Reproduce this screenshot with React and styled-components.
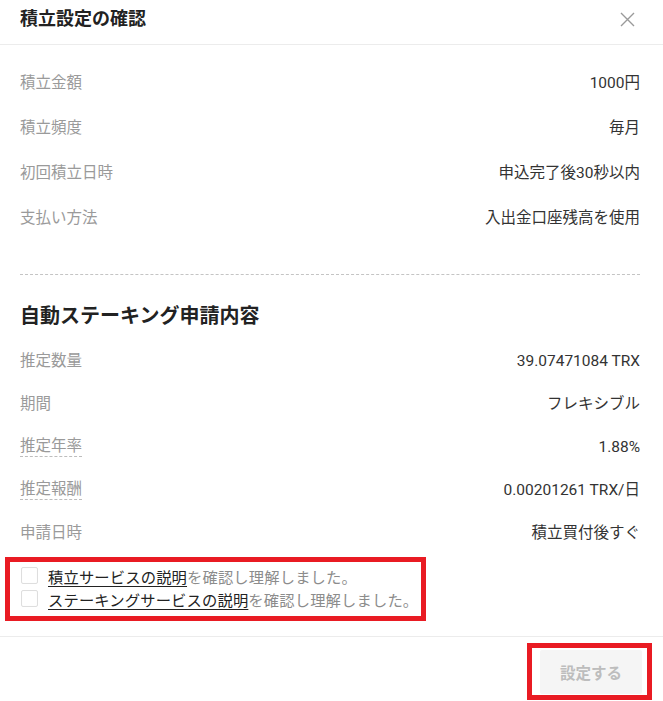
import React, { useState } from 'react';
import styled, { createGlobalStyle } from 'styled-components';

const GlobalStyle = createGlobalStyle`
  body {
    margin: 0;
    background: #fff;
    font-family: "Roboto", "Noto Sans CJK JP", sans-serif;
    color: #333;
  }
  * {
    box-sizing: border-box;
  }
`;

const Modal = styled.div`
  width: 663px;
  height: 701px;
  display: flex;
  flex-direction: column;
  background: #fff;
  overflow: hidden;
`;

const Header = styled.div`
  display: flex;
  align-items: center;
  justify-content: space-between;
  height: 45px;
  padding: 7px 28px 13px 20px;
  border-bottom: 1px solid #ececec;
`;

const Title = styled.h1`
  margin: 0;
  font-size: 18px;
  line-height: 24px;
  font-weight: 700;
  color: #222;
`;

const CloseButton = styled.button`
  border: 0;
  padding: 0;
  background: none;
  width: 16px;
  height: 16px;
  display: flex;
  align-items: center;
  justify-content: center;
  cursor: pointer;
`;

const Body = styled.div`
  flex: 1;
  padding: 15px 23px 0 20px;
  display: flex;
  flex-direction: column;
`;

const Row = styled.div`
  height: ${p => p.$h}px;
  display: flex;
  align-items: center;
  justify-content: space-between;
  font-size: 15.5px;
  line-height: 20px;
`;

const Label = styled.span`
  color: #9a9a9a;
  ${p => p.$hint && `
    border-bottom: 1px dashed #bdbdbd;
    line-height: 19px;
  `}
`;

const Value = styled.span`
  color: #333;
`;

const Divider = styled.div`
  margin-top: 34px;
  border-top: 1px dashed #c4c4c4;
`;

const SectionTitle = styled.h2`
  margin: 27px 0 9px;
  font-size: 20px;
  line-height: 28px;
  font-weight: 700;
  color: #222;
`;

const Marked = styled.div`
  border: 5px solid #e91b23;
`;

const Agreements = styled(Marked)`
  width: 421px;
  margin: 3px 0 0 -15px;
  padding: 2px 0 6px 11px;
`;

const Agreement = styled.label`
  display: flex;
  align-items: center;
  gap: 10px;
  height: 23px;
  font-size: 15.3px;
  letter-spacing: 0.15px;
  white-space: nowrap;
  color: #8c8c8c;
  cursor: pointer;
`;

const Box = styled.span`
  width: 17px;
  height: 17px;
  border: 1px solid #dedede;
  border-radius: 2px;
  box-shadow: inset 0 0 1px rgba(0, 0, 0, 0.05);
  background: ${p => (p.$on ? '#222' : '#fff')};
  flex-shrink: 0;
`;

const Link = styled.span`
  color: #222;
  text-decoration: underline;
  text-underline-offset: 3px;
`;

const Footer = styled.div`
  display: flex;
  justify-content: flex-end;
  height: 65px;
  padding: 6px 11px 0 0;
  border-top: 1px solid #ececec;
`;

const ButtonFrame = styled(Marked)`
  height: 57px;
  padding: 2px 5px 1px 8px;
`;

const SubmitButton = styled.button`
  width: 102px;
  height: 44px;
  border: 0;
  border-radius: 2px;
  background: #f5f5f5;
  color: #bdbdbd;
  font-family: "Noto Sans CJK JP", sans-serif;
  font-size: 15.5px;
  font-weight: 700;
`;

const plan = [
  ['積立金額', '1000円'],
  ['積立頻度', '毎月'],
  ['初回積立日時', '申込完了後30秒以内'],
  ['支払い方法', '入出金口座残高を使用'],
];

const staking = [
  ['推定数量', '39.07471084 TRX'],
  ['期間', 'フレキシブル'],
  ['推定年率', '1.88%', true],
  ['推定報酬', '0.00201261 TRX/日', true],
  ['申請日時', '積立買付後すぐ'],
];

const agreements = ['積立サービスの説明', 'ステーキングサービスの説明'];

export default function App() {
  const [checked, setChecked] = useState([false, false]);

  const toggle = i => setChecked(prev => prev.map((v, j) => (j === i ? !v : v)));

  return (
    <Modal>
      <GlobalStyle />
      <Header>
        <Title>積立設定の確認</Title>
        <CloseButton aria-label="close">
          <svg width="15" height="15" viewBox="0 0 15 15">
            <path d="M1 1L14 14M14 1L1 14" stroke="#9a9a9a" strokeWidth="1.4" fill="none" />
          </svg>
        </CloseButton>
      </Header>

      <Body>
        {plan.map(([k, v]) => (
          <Row key={k} $h={45}>
            <Label>{k}</Label>
            <Value>{v}</Value>
          </Row>
        ))}

        <Divider />
        <SectionTitle>自動ステーキング申請内容</SectionTitle>

        {staking.map(([k, v, hint]) => (
          <Row key={k} $h={43}>
            <Label $hint={hint}>{k}</Label>
            <Value>{v}</Value>
          </Row>
        ))}

        <Agreements>
          {agreements.map((text, i) => (
            <Agreement key={text} onClick={() => toggle(i)}>
              <Box $on={checked[i]} />
              <span>
                <Link>{text}</Link>を確認し理解しました。
              </span>
            </Agreement>
          ))}
        </Agreements>
      </Body>

      <Footer>
        <ButtonFrame>
          <SubmitButton disabled>設定する</SubmitButton>
        </ButtonFrame>
      </Footer>
    </Modal>
  );
}
